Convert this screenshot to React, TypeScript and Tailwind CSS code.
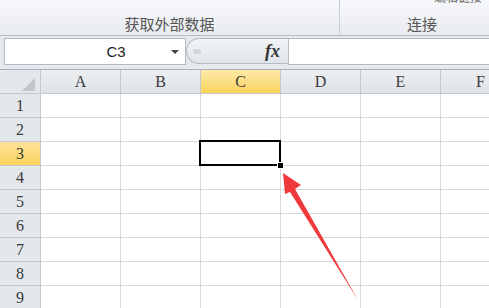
const COLS = ["A", "B", "C", "D", "E", "F"];
const ROWS = [1, 2, 3, 4, 5, 6, 7, 8, 9];

function HeaderCell({ label, active }: { label: string; active: boolean }) {
  return (
    <div
      className={`flex h-[24px] items-center justify-center border-r border-b border-[#c4c8ce] text-[16px] text-[#3a3a3a] ${
        active
          ? "bg-gradient-to-b from-[#fde9a8] to-[#fbd45a]"
          : "bg-gradient-to-b from-[#eceef1] to-[#dfe3e8]"
      }`}
    >
      {label}
    </div>
  );
}

function RowHeader({ n }: { n: number }) {
  return (
    <div
      className={`flex h-[24px] items-center justify-center border-r border-b border-[#c4c8ce] text-[16px] text-[#3a3a3a] ${
        n === 3
          ? "bg-gradient-to-b from-[#fde39a] to-[#fbd45a]"
          : "bg-[#e4e7eb]"
      }`}
    >
      {n}
    </div>
  );
}

function Arrow() {
  return (
    <svg
      className="pointer-events-none absolute left-0 top-0 z-20"
      width={489}
      height={308}
      viewBox="0 0 489 308"
    >
      <polygon
        points="283,173 301,185 295,189 358,300 290,192 285,194"
        fill="#f0393b"
      />
    </svg>
  );
}

export default function App() {
  return (
    <div
      className="relative h-[308px] w-[489px] overflow-hidden bg-[#e6e9ee]"
      style={{ fontFamily: '"Liberation Serif", "Noto Sans CJK SC", serif' }}
    >
      {/* ribbon */}
      <div className="flex h-[36px] border-b border-[#b8bec7] bg-gradient-to-b from-[#f7f8fa] to-[#e8ebef] font-['Noto_Sans_CJK_SC',sans-serif] text-[15px] text-[#555]">
        <div className="flex w-[340px] items-end justify-center border-r border-[#c8cdd4] pb-[4px] leading-none">
          获取外部数据
        </div>
        <div className="relative flex flex-1 items-end pb-[4px] pl-[67px] leading-none">
          连接
          <span className="absolute -top-[9px] left-[94px] text-[12px] text-[#666]">
            编辑链接
          </span>
        </div>
      </div>

      {/* formula bar */}
      <div className="flex h-[33px] items-start pt-[2px] pl-[4px]">
        <div className="flex h-[27px] w-[182px] items-center border border-[#b4bac3] bg-white font-['Liberation_Sans',sans-serif] text-[15px] text-[#222]">
          <span className="flex-1 pl-[56px] text-center leading-none">C3</span>
          <span className="mr-[6px] h-0 w-0 border-x-[4px] border-t-[4px] border-x-transparent border-t-[#444]" />
        </div>
        <div className="flex h-[26px] w-[102px] items-center rounded-l-[13px] border border-r-0 border-[#b4bac3] bg-gradient-to-b from-[#f2f4f6] to-[#e1e5ea] pl-[6px]">
          <span className="h-[5px] w-[8px] rounded-full bg-[#d2d6db]" />
          <span className="ml-auto mr-[8px] font-['Liberation_Serif',serif] text-[18px] font-bold italic leading-none text-[#333]">
            fx
          </span>
        </div>
        <div className="h-[27px] flex-1 border border-r-0 border-[#b4bac3] bg-white" />
      </div>

      {/* sheet grid */}
      <div className="relative border-t border-[#a9b0b9] bg-white">
        <div className="grid grid-cols-[41px_repeat(6,80px)]">
          <div className="relative h-[24px] border-r border-b border-[#c4c8ce] bg-[#e4e7eb]">
            <svg
              className="absolute left-[22px] top-[8px]"
              width={13}
              height={13}
              viewBox="0 0 13 13"
            >
              <polygon points="13,0 13,13 0,13" fill="#c2c6cc" />
            </svg>
          </div>
          {COLS.map((c) => (
            <HeaderCell key={c} label={c} active={c === "C"} />
          ))}
          {ROWS.map((r) => (
            <div key={r} className="contents">
              <RowHeader n={r} />
              {COLS.map((c) => (
                <div
                  key={c}
                  className="relative h-[24px] border-r border-b border-[#d8d8d8] bg-white"
                >
                  {r === 3 && c === "C" && (
                    <>
                      <div className="absolute -left-[2px] -top-[2px] z-10 h-[26px] w-[82px] border-2 border-black" />
                      <div className="absolute -right-[4px] -bottom-[4px] z-10 h-[7px] w-[7px] border border-white bg-black" />
                    </>
                  )}
                </div>
              ))}
            </div>
          ))}
        </div>
      </div>

      <Arrow />
    </div>
  );
}
